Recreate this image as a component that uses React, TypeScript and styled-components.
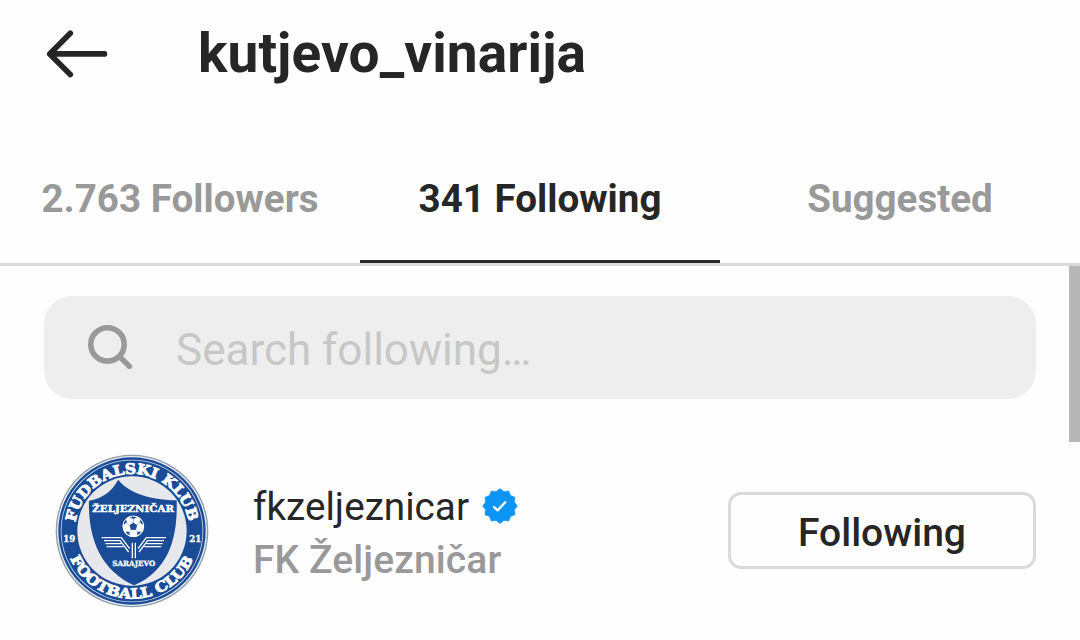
import React from "react";
import styled, { createGlobalStyle } from "styled-components";

const GlobalStyle = createGlobalStyle`
  * { box-sizing: border-box; }
  body {
    margin: 0;
    background: #fefefe;
    font-family: Roboto, "Liberation Sans", sans-serif;
    color: #262626;
    overflow: hidden;
  }
`;

const Screen = styled.div`
  width: 1080px;
  height: 640px;
  display: flex;
  flex-direction: column;
`;

const Header = styled.header`
  height: 134px;
  padding: 17px 0 0 44px;
  display: flex;
  align-items: flex-start;
  gap: 88px;
`;

const BackButton = styled.button`
  width: 66px;
  height: 72px;
  padding: 0;
  border: 0;
  background: none;
  svg { display: block; }
`;

const Title = styled.h1`
  margin: 0;
  font-size: 55px;
  font-weight: 700;
  line-height: 72px;
  letter-spacing: 0.1px;
`;

const Tabs = styled.nav`
  height: 132px;
  display: grid;
  grid-template-columns: repeat(3, 1fr);
  border-bottom: 3px solid #dadada;
`;

const Tab = styled.button<{ $active?: boolean }>`
  display: flex;
  align-items: center;
  justify-content: center;
  padding: 3px 0 0;
  border: 0;
  border-bottom: 3px solid ${(p) => (p.$active ? "#262626" : "transparent")};
  background: none;
  font-family: inherit;
  font-size: 38.6px;
  font-weight: 700;
  color: ${(p) => (p.$active ? "#262626" : "#999999")};
`;

const Body = styled.main`
  flex: 1;
  display: flex;
  justify-content: space-between;
`;

const List = styled.div`
  width: 992px;
  margin: 30px 0 0 44px;
`;

const SearchBox = styled.div`
  height: 103px;
  padding: 4px 0 0 40px;
  border-radius: 28px;
  background: #eeeeee;
  display: flex;
  align-items: center;
  gap: 42px;
  svg { display: block; margin-top: -5px; }
`;

const Placeholder = styled.span`
  font-size: 44px;
  color: #c7c7c7;
`;

const UserRow = styled.article`
  display: flex;
  align-items: center;
  margin-top: 55px;
  padding-left: 11px;
  height: 154px;
`;

const UserText = styled.div`
  flex: 1;
  margin-left: 44px;
  padding-top: 4px;
`;

const NameLine = styled.div`
  display: flex;
  align-items: center;
  gap: 13px;
  line-height: 53px;
  svg { margin-top: -1px; }
`;

const Username = styled.span`
  font-size: 38.7px;
`;

const FullName = styled.div`
  font-size: 39px;
  line-height: 54px;
  font-weight: 500;
  letter-spacing: 0.1px;
  color: #999999;
`;

const FollowButton = styled.button`
  width: 308px;
  height: 77px;
  margin-top: -1px;
  padding: 5px 0 0;
  border: 3px solid #dadada;
  border-radius: 13px;
  background: #fefefe;
  font-family: inherit;
  font-size: 39px;
  font-weight: 500;
  color: #262626;
`;

const ScrollThumb = styled.div`
  width: 11px;
  height: 176px;
  background: #b7b7b7;
`;

const BackArrow = () => (
  <svg width="66" height="72" viewBox="44 17 66 72" fill="none" stroke="#262626" strokeWidth="5.6" strokeLinecap="round" strokeLinejoin="round">
    <path d="M70.3 33.2 49.7 53.9 70.3 74.6M50 53.9H104.5" />
  </svg>
);

const SearchIcon = () => (
  <svg width="50" height="50" viewBox="84 322 50 50" fill="none" stroke="#999999" strokeLinecap="round">
    <circle cx="107.5" cy="344.4" r="16.7" strokeWidth="5.6" />
    <path d="M119.5 356.5 129.5 366.4" strokeWidth="5.4" />
  </svg>
);

const badgePoints = Array.from({ length: 24 }, (_, i) => {
  const angle = (i * Math.PI) / 12 - Math.PI / 2;
  const r = i % 2 ? 14.9 : 17.4;
  return `${(18 + r * Math.cos(angle)).toFixed(2)},${(18 + r * Math.sin(angle)).toFixed(2)}`;
}).join(" ");

const VerifiedBadge = () => (
  <svg width="36" height="36" viewBox="0 0 36 36">
    <polygon points={badgePoints} fill="#0d95f6" stroke="#0d95f6" strokeWidth=".6" strokeLinejoin="round" />
    <path d="M12 19 15.6 22.4 23.2 14.2" fill="none" stroke="#fff" strokeWidth="2.3" strokeLinecap="round" strokeLinejoin="round" />
  </svg>
);

const serif = '"DejaVu Serif", "Liberation Serif", serif';

const ClubCrest = () => (
  <svg width="154" height="154" viewBox="15 18 462 462" fontFamily={serif} fontWeight="700" fill="#fff">
    <defs>
      <path id="arcTop" d="M76.500 223A171.500 171.500 0 0 1 415.500 223" />
      <path id="arcBottom" d="M61 331A202 202 0 0 0 431 331" />
    </defs>
    <circle cx="246" cy="249" r="229" fill="#8f9dac" />
    <circle cx="246" cy="249" r="225" fill="#e5eaf0" />
    <circle cx="246" cy="249" r="221" fill="#194b96" />
    <circle cx="246" cy="249" r="214" fill="#c9d7ea" />
    <circle cx="246" cy="249" r="211.5" fill="#194b96" />
    <circle cx="246" cy="249" r="164" fill="#e6e8eb" />
    <path d="M205 95C231 130 290 155 380 157C383 260 362 365 252 412C148 365 114 265 117 158C157 151 184 132 205 95Z" fill="#194b96" />
    <text fontSize="43" stroke="#fff" strokeWidth="2.6" textLength="484" lengthAdjust="spacingAndGlyphs">
      <textPath href="#arcTop">FUDBALSKI KLUB</textPath>
    </text>
    <text fontSize="42" stroke="#fff" strokeWidth="2.6" textLength="464" lengthAdjust="spacingAndGlyphs">
      <textPath href="#arcBottom">FOOTBALL CLUB</textPath>
    </text>
    <text x="40" y="281" fontSize="26" stroke="#fff" textLength="36" lengthAdjust="spacingAndGlyphs">19</text>
    <text x="418" y="281" fontSize="26" stroke="#fff" textLength="36" lengthAdjust="spacingAndGlyphs">21</text>
    <text x="127" y="193" fontSize="29" stroke="#fff" strokeWidth="1.4" textLength="245" lengthAdjust="spacingAndGlyphs">ŽELJEZNIČAR</text>
    <text x="187" y="354" fontSize="22" stroke="#fff" strokeWidth=".8" textLength="129" lengthAdjust="spacingAndGlyphs">SARAJEVO</text>
    <circle cx="250" cy="235" r="32" />
    <g fill="#194b96" stroke="#194b96" strokeWidth="1">
      <path d="M250 224 261 232 257 245H243L239 232Z" />
      <path d="M240 207 250 213 260 207 255 205H245ZM222 230 230 222 228 214 221 223ZM278 230 270 222 272 214 279 223ZM228 251 237 252 239 261 231 257ZM272 251 263 252 261 261 269 257Z" />
      <path d="M250 225V212M260 233 271 221M257 245 264 254M243 245 236 254M239 233 229 221" fill="none" />
    </g>
    <circle cx="250" cy="235" r="31" fill="none" stroke="#fff" strokeWidth="2.500" />
    <g fill="none" stroke="#fff" strokeWidth="3.8">
      <path d="M155 269H214L239 302M162 278H210L236 312M166 287H214M170 296H220" />
      <path d="M348 269H289L264 302M342 278H293L267 312M338 287H289M334 296H283" />
      <path d="M247 284V331M256 284V331" strokeWidth="4" />
    </g>
  </svg>
);

export default function App() {
  return (
    <Screen>
      <GlobalStyle />
      <Header>
        <BackButton aria-label="Back"><BackArrow /></BackButton>
        <Title>kutjevo_vinarija</Title>
      </Header>
      <Tabs>
        <Tab>2.763 Followers</Tab>
        <Tab $active>341 Following</Tab>
        <Tab>Suggested</Tab>
      </Tabs>
      <Body>
        <List>
          <SearchBox>
            <SearchIcon />
            <Placeholder>Search following…</Placeholder>
          </SearchBox>
          <UserRow>
            <ClubCrest />
            <UserText>
              <NameLine>
                <Username>fkzeljeznicar</Username>
                <VerifiedBadge />
              </NameLine>
              <FullName>FK Željezničar</FullName>
            </UserText>
            <FollowButton>Following</FollowButton>
          </UserRow>
        </List>
        <ScrollThumb />
      </Body>
    </Screen>
  );
}
